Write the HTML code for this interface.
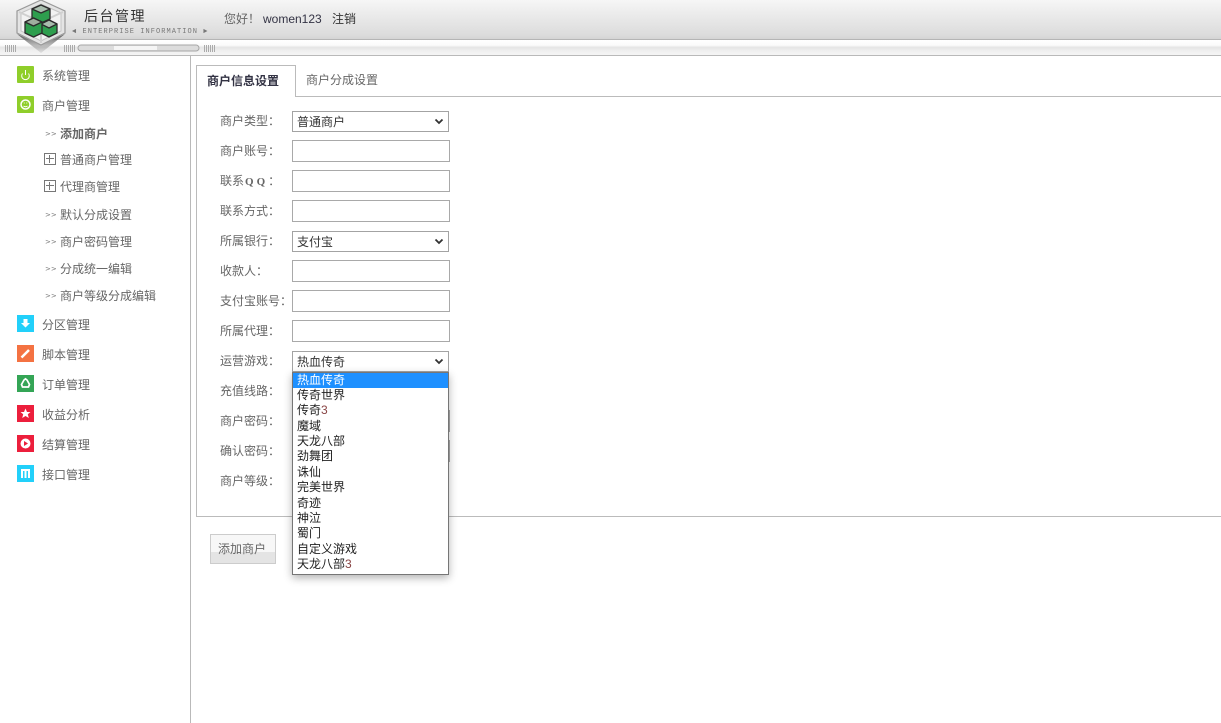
<!DOCTYPE html>
<html lang="zh">
<head>
<meta charset="utf-8">
<title>后台管理</title>
<style>
html,body{margin:0;padding:0;background:#fff;width:1221px;height:723px;overflow:hidden}
body{position:relative;font-family:"WenQuanYi Zen Hei","Noto Sans CJK SC",sans-serif;font-size:12px;color:#666}
.a{position:absolute;white-space:nowrap;line-height:16px}
.l{font-size:12px;color:#666}
.inp{position:absolute;left:292px;width:156px;height:20px;border:1px solid #a9a9a9;background:#fff}
.sel{position:absolute;left:292px;width:155px;height:19px;border:1px solid #a3a3a3;background:#fff;color:#333;line-height:19px;padding:0;font-size:12px}
.sel span{position:absolute;left:4px;top:0}
.sel svg{position:absolute;right:4px;top:6px}
.ic{position:absolute;left:17px;width:17px;height:17px}
.opt{position:absolute;left:4px;margin-top:-1px;color:#222;font-size:12px;line-height:15px;white-space:nowrap}
.plus{position:absolute;left:44px;width:10px;height:10px;border:1px solid #777}
.plus:before{content:"";position:absolute;left:1px;right:1px;top:4px;height:1px;background:#777}
.plus:after{content:"";position:absolute;top:1px;bottom:1px;left:4px;width:1px;background:#777}
.gt{position:absolute;left:45px;font:7px/10px "DejaVu Sans",sans-serif;color:#777;letter-spacing:0}
.q{font:bold 11px "Liberation Serif",serif;letter-spacing:3px;margin:0 0 0 1px}
</style>
</head>
<body>
<div class="a" style="left:0;top:0;width:1221px;height:39px;background:linear-gradient(#f6f6f6,#ededed 30%,#dcdcdc 90%,#d4d4d4)"></div>
<div class="a" style="left:0;top:39px;width:1221px;height:1px;background:#b5b5b5"></div>
<div class="a" style="left:0;top:40px;width:1221px;height:15px;background:linear-gradient(#fff,#fbfbfb 35%,#e4e4e4 50%,#efefef 70%,#f5f5f5)"></div>
<div class="a" style="left:0;top:55px;width:1221px;height:1px;background:#b9b9b9"></div>

<svg class="a" style="left:5px;top:44px" width="230" height="9" viewBox="0 0 230 9">
<g stroke="#aaa" stroke-width="1">
<path d="M.5 1v7M2.500 1v7M4.500 1v7M6.500 1v7M8.500 1v7M10.500 1v7"/>
<path d="M59.500 1v7M61.500 1v7M63.500 1v7M65.500 1v7M67.500 1v7M69.500 1v7"/>
<path d="M199.500 1v7M201.500 1v7M203.500 1v7M205.500 1v7M207.500 1v7M209.500 1v7"/>
</g>
<rect x="73" y="1" width="121" height="6" rx="3" fill="#dcdcdc" stroke="#a6a6a6"/>
<rect x="109" y="2" width="43" height="4" fill="#f5f5f5"/>
</svg>

<svg class="a" style="left:12px;top:0" width="60" height="54" viewBox="0 0 60 54">
<defs><linearGradient id="sh" x1="0" y1="0" x2="0" y2="1"><stop offset="0" stop-color="#555"/><stop offset="1" stop-color="#999" stop-opacity=".2"/></linearGradient></defs>
<path d="M5 34 29 53 53 34 29 45Z" fill="url(#sh)"/>
<path d="M29 0 53 11V33L29 45 5 33V11Z" fill="#e4e4e4" stroke="#999" stroke-width="1.200"/>
<path d="M29 4 49 13V31L29 41 9 31V13Z" fill="#f2f2f2" stroke="#c4c4c4"/>
<path d="M29 22V43M29 22 7 12M29 22 51 12" stroke="#d0d0d0" fill="none" stroke-width="2"/>
<g stroke="#2b2b2b" stroke-width="1.300" stroke-linejoin="round">
<path d="M29 5 38 9V19L29 23 20 19V9Z" fill="#2e9e4e"/>
<path d="M29 5 38 9 29 13 20 9Z" fill="#a9bdae"/>
<path d="M37 20 45 24V33L37 37 29 33V24Z" fill="#2e9e4e"/>
<path d="M37 20 45 24 37 28 29 24Z" fill="#a9bdae"/>
<path d="M21.500 18 30 22V33L21.500 37 13 33V22Z" fill="#2e9e4e"/>
<path d="M21.500 18 30 22 21.500 26 13 22Z" fill="#9fae9f"/>
</g>
</svg>

<div class="a" style="left:84px;top:8px;font-size:14px;letter-spacing:1.500px;color:#333">后台管理</div>
<div class="a" style="left:72px;top:27px;font:7px/10px 'Liberation Mono',monospace;color:#777;letter-spacing:1.050px">◄ ENTERPRISE INFORMATION ►</div>
<div class="a" style="left:224px;top:11px;font-size:12px;color:#666">您好！</div>
<div class="a" style="left:263px;top:11px;font:12px/16px 'Liberation Sans',sans-serif;color:#334">women123</div>
<div class="a" style="left:332px;top:11px;font-size:12px;color:#333">注销</div>

<div class="a" style="left:190px;top:56px;width:1px;height:667px;background:#b9b9b9"></div>

<!-- sidebar icons -->
<svg class="ic" style="top:66px" viewBox="0 0 17 17"><rect width="17" height="17" rx="1" fill="#8fce2a"/><path d="M5.500 7.500a3.800 3.800 0 1 0 6 0M8.500 4v5" stroke="#fff" fill="none"/></svg>
<svg class="ic" style="top:96px" viewBox="0 0 17 17"><rect width="17" height="17" rx="1" fill="#8fce2a"/><circle cx="8.500" cy="8.500" r="4.500" stroke="#fff" stroke-width="1.500" fill="none"/><path d="M6.800 7h.9M9.300 7h.9M6.500 10q2 1.400 4 0" stroke="#fff" fill="none"/></svg>
<svg class="ic" style="top:315px" viewBox="0 0 17 17"><rect width="17" height="17" fill="#22d0fa"/><path d="M6.500 4h4v4h2.500l-4.500 4.500L4 8h2.500Z" fill="#fff"/></svg>
<svg class="ic" style="top:345px" viewBox="0 0 17 17"><rect width="17" height="17" fill="#f47242"/><path d="M4.500 12.500 12 5" stroke="#fff" stroke-width="2.500"/></svg>
<svg class="ic" style="top:375px" viewBox="0 0 17 17"><rect width="17" height="17" fill="#34a556"/><path d="M7 5 8.500 3.800 10 5l2.500 4.500-1 2.500H5.500l-1-2.500Z" stroke="#fff" stroke-width="1.700" fill="none"/></svg>
<svg class="ic" style="top:405px" viewBox="0 0 17 17"><rect width="17" height="17" fill="#ec1f3c"/><path d="M8.500 3.500 10 7h3.500L10.800 9.300 11.800 13 8.500 11 5.200 13 6.200 9.300 3.500 7H7Z" fill="#fff"/></svg>
<svg class="ic" style="top:435px" viewBox="0 0 17 17"><rect width="17" height="17" fill="#ec1f3c"/><circle cx="8.500" cy="8.500" r="5" fill="#fff"/><path d="M7 6l4 2.500L7 11Z" fill="#ec1f3c"/></svg>
<svg class="ic" style="top:465px" viewBox="0 0 17 17"><rect width="17" height="17" fill="#22d0fa"/><path d="M4 4h9v9h-2V6H9.500v7h-2V6H6v7H4Z" fill="#fff"/></svg>

<div class="a l" style="left:42px;top:68px">系统管理</div>
<div class="a l" style="left:42px;top:98px">商户管理</div>
<div class="gt" style="top:129px">&gt;&gt;</div><div class="a l" style="left:60px;top:126px;font-weight:bold">添加商户</div>
<div class="plus" style="top:153px"></div><div class="a l" style="left:60px;top:152px">普通商户管理</div>
<div class="plus" style="top:180px"></div><div class="a l" style="left:60px;top:179px">代理商管理</div>
<div class="gt" style="top:210px">&gt;&gt;</div><div class="a l" style="left:60px;top:207px">默认分成设置</div>
<div class="gt" style="top:237px">&gt;&gt;</div><div class="a l" style="left:60px;top:234px">商户密码管理</div>
<div class="gt" style="top:264px">&gt;&gt;</div><div class="a l" style="left:60px;top:261px">分成统一编辑</div>
<div class="gt" style="top:291px">&gt;&gt;</div><div class="a l" style="left:60px;top:288px">商户等级分成编辑</div>
<div class="a l" style="left:42px;top:317px">分区管理</div>
<div class="a l" style="left:42px;top:347px">脚本管理</div>
<div class="a l" style="left:42px;top:377px">订单管理</div>
<div class="a l" style="left:42px;top:407px">收益分析</div>
<div class="a l" style="left:42px;top:437px">结算管理</div>
<div class="a l" style="left:42px;top:467px">接口管理</div>

<!-- panel + tabs -->
<div class="a" style="left:196px;top:96px;width:1025px;height:421px;border-left:1px solid #bbb;border-top:1px solid #bbb;border-bottom:1px solid #bbb;box-sizing:border-box"></div>
<div class="a" style="left:196px;top:65px;width:100px;height:32px;border:1px solid #bbb;border-bottom:0;background:#fff;box-sizing:border-box"></div>
<div class="a" style="left:207px;top:73px;font-weight:bold;color:#334;font-size:12px">商户信息设置</div>
<div class="a" style="left:306px;top:72px;color:#666;font-size:12px">商户分成设置</div>

<!-- labels -->
<div class="a l" style="left:220px;top:113px">商户类型：</div>
<div class="a l" style="left:220px;top:143px">商户账号：</div>
<div class="a l" style="left:220px;top:173px">联系<span class="q">QQ</span>：</div>
<div class="a l" style="left:220px;top:203px">联系方式：</div>
<div class="a l" style="left:220px;top:233px">所属银行：</div>
<div class="a l" style="left:220px;top:263px">收款人：</div>
<div class="a l" style="left:220px;top:293px">支付宝账号：</div>
<div class="a l" style="left:220px;top:323px">所属代理：</div>
<div class="a l" style="left:220px;top:353px">运营游戏：</div>
<div class="a l" style="left:220px;top:383px">充值线路：</div>
<div class="a l" style="left:220px;top:413px">商户密码：</div>
<div class="a l" style="left:220px;top:443px">确认密码：</div>
<div class="a l" style="left:220px;top:473px">商户等级：</div>

<!-- controls -->
<div class="sel" style="top:111px"><span>普通商户</span><svg width="10" height="7" viewBox="0 0 10 7"><path d="M1.500 1.500 5 5 8.500 1.500" stroke="#333" stroke-width="1.800" fill="none"/></svg></div>
<div class="inp" style="top:140px"></div>
<div class="inp" style="top:170px"></div>
<div class="inp" style="top:200px"></div>
<div class="sel" style="top:231px"><span>支付宝</span><svg width="10" height="7" viewBox="0 0 10 7"><path d="M1.500 1.500 5 5 8.500 1.500" stroke="#333" stroke-width="1.800" fill="none"/></svg></div>
<div class="inp" style="top:260px"></div>
<div class="inp" style="top:290px"></div>
<div class="inp" style="top:320px"></div>
<div class="sel" style="top:351px"><span>热血传奇</span><svg width="10" height="7" viewBox="0 0 10 7"><path d="M1.500 1.500 5 5 8.500 1.500" stroke="#333" stroke-width="1.800" fill="none"/></svg></div>
<div class="inp" style="top:410px"></div>
<div class="inp" style="top:440px"></div>

<!-- button -->
<div class="a" style="left:210px;top:534px;width:66px;height:30px;box-sizing:border-box;border:1px solid #ccc;background:linear-gradient(#f7f7f7 60%,#e4e4e4 60%);text-align:center;line-height:28px;color:#666;font-size:12px;text-indent:-2px">添加商户</div>

<!-- dropdown -->
<div class="a" style="left:292px;top:372px;width:157px;height:203px;box-sizing:border-box;border:1px solid #767676;background:#fff;box-shadow:0 3px 8px rgba(0,0,0,.3)">
<div style="position:absolute;left:0;top:0;width:155px;height:15px;background:#1e90ff"></div>
<div class="opt" style="top:0;color:#fff">热血传奇</div>
<div class="opt" style="top:15px">传奇世界</div>
<div class="opt" style="top:30px">传奇<span style="font-family:'Liberation Sans';color:#844">3</span></div>
<div class="opt" style="top:46px">魔域</div>
<div class="opt" style="top:61px">天龙八部</div>
<div class="opt" style="top:76px">劲舞团</div>
<div class="opt" style="top:92px">诛仙</div>
<div class="opt" style="top:107px">完美世界</div>
<div class="opt" style="top:123px">奇迹</div>
<div class="opt" style="top:138px">神泣</div>
<div class="opt" style="top:153px">蜀门</div>
<div class="opt" style="top:169px">自定义游戏</div>
<div class="opt" style="top:184px">天龙八部<span style="font-family:'Liberation Sans';color:#844">3</span></div>
</div>
</body>
</html>
